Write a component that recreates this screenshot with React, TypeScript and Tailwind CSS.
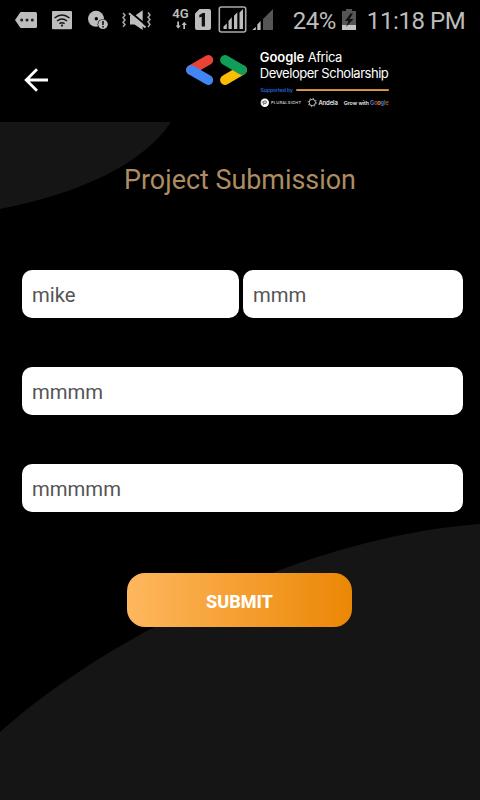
import React from "react";

function StatusBar() {
  return (
    <div className="h-[42px] w-full bg-black">
      <svg width="480" height="42" viewBox="0 0 480 42" className="block" fill="#bdbdbd">
        {/* message tag */}
        <path d="M20.5 12H35.5Q37 12 37 13.500V26.500Q37 28 35.500 28H20.500L15 20Z" />
        <g fill="#222">
          <circle cx="21.700" cy="20" r="1.500" />
          <circle cx="27" cy="20" r="1.500" />
          <circle cx="32.300" cy="20" r="1.500" />
        </g>
        {/* wifi */}
        <rect x="52" y="11" width="20" height="18.300" rx="1" />
        <g fill="none" stroke="#151515" strokeWidth="1.500">
          <path d="M54.500 18Q62 12 69.500 18" />
          <path d="M57 21Q62 17 67 21" />
          <path d="M59.400 23.700Q62 21.700 64.600 23.700" />
        </g>
        <circle cx="62" cy="25.600" r="1.100" fill="#151515" />
        {/* disc with alert */}
        <circle cx="96" cy="18.800" r="8" />
        <circle cx="96.300" cy="18.800" r="1.700" fill="#000" />
        <circle cx="103" cy="24.300" r="5.400" fill="#000" />
        <circle cx="103" cy="24.300" r="4.800" />
        <path d="M102.200 21h1.600v4h-1.600zM102.200 26h1.600v1.600h-1.600z" fill="#111" />
        {/* muted speaker */}
        <path d="M130 16H134.500L142.700 10.300V30L134.500 24.500H130Z" />
        <path d="M130.500 12.200L147 25.800" stroke="#000" strokeWidth="2" />
        <path d="M129 13.200L145.500 27.500" stroke="#bdbdbd" strokeWidth="2" />
        <path
          d="M123 13l2 2.300-2 2.300 2 2.300-2 2.300 2 2.300-2 2.300M148 12.500l2 2.500-2 2.300 2 2.300-2 2.300 2 2.300-2 3"
          fill="none"
          stroke="#a8a8a8"
          strokeWidth="1.500"
        />
        {/* mobile data */}
        <text x="172.300" y="18" fontFamily="Roboto, sans-serif" fontSize="12.600" fontWeight="600" textLength="16.500" lengthAdjust="spacingAndGlyphs">4G</text>
        <path d="M177.300 21.500h1.700v4h1.700l-2.500 3.300-2.500-3.300h1.600zM183.300 29h1.700v-4h1.700l-2.500-3.300-2.500 3.300h1.600z" />
        {/* sim */}
        <path d="M199.500 9H209Q211 9 211 11V28Q211 30 209 30H197Q195 30 195 28V13.500Z" />
        <path d="M202.800 13H205V26.500H201.700V16.700L199.300 17.600V15Z" fill="#111" />
        {/* boxed signal */}
        <rect x="219.300" y="7" width="26.400" height="25" rx="2" fill="none" stroke="#aaa" strokeWidth="1.600" />
        <path d="M223.500 29v-2.500l3.300-3V29zM228.500 29v-8l3.300-3.700V29zM234 29V15.800l3.300-3.500V29zM239.500 29V12.500l3.500-3.500V29z" />
        {/* signal */}
        <path d="M263 30V19L273 9V30Z" fill="#555" />
        <path d="M252.300 30l3.500-3.300V30zM257.300 30v-5.500l3.300-3.500V30z" />
        <text x="292.800" y="29" fontFamily="Roboto, sans-serif" fontSize="24" textLength="43.500">24%</text>
        {/* battery */}
        <path d="M342 11H346V9H352V11H356V30H342Z" fill="#555" />
        <path d="M342 25H356V30H342Z" fill="#c4c4c4" />
        <path d="M350.500 13.500L345 21H348.500L346 27L353.500 19H349.500L353 13.500Z" fill="#111" />
        <text x="366.800" y="29" fontFamily="Roboto, sans-serif" fontSize="24" textLength="99">11:18 PM</text>
      </svg>
    </div>
  );
}

function ScholarshipLogo() {
  return (
    <svg width="220" height="64" viewBox="182 48 220 64" className="block" fill="#fff" fontFamily="Inter, sans-serif">
      <g strokeWidth="9.800" strokeLinecap="round" fill="none">
        <path d="M208.300 60L191 70" stroke="#ea4335" />
        <path d="M191 70L208.300 80" stroke="#4285f4" />
        <path d="M225 80L242 70" stroke="#fbbc04" />
        <path d="M225 60L242 70" stroke="#0f9d58" />
      </g>
      <text x="259.800" y="62" fontSize="13" fontWeight="600" textLength="44.500">Google</text>
      <text x="307.800" y="62" fontSize="13" textLength="34.500">Africa</text>
      <text x="259.800" y="78" fontSize="13" textLength="129">Developer Scholarship</text>
      <text x="260.500" y="91.700" fontSize="5.200" fontWeight="600" fill="#2166dc" textLength="32.500">Supported by</text>
      <rect x="296.300" y="89.100" width="92.500" height="1.900" fill="#dd9a45" />
      <circle cx="264.800" cy="102.700" r="4.200" />
      <path d="M263.700 105V101H266.200V103.300H264M262.200 103.300V101.500" fill="none" stroke="#333" strokeWidth=".7" />
      <text x="271" y="104.300" fontSize="4" fontWeight="500" textLength="30" fill="#ddd">PLURALSIGHT</text>
      <circle cx="312.300" cy="102.500" r="3.200" fill="none" stroke="#ddd" strokeWidth=".9" />
      <circle cx="312.300" cy="102.500" r="4.200" fill="none" stroke="#ddd" strokeWidth="1" strokeDasharray="1 2.300" />
      <text x="318.500" y="104.800" fontSize="6" fontWeight="500" textLength="19.300">Andela</text>
      <text x="343.800" y="104.600" fontSize="5.300" fontWeight="500" textLength="25.200">Grow with</text>
      <text x="370" y="104.600" fontSize="5.600" fontWeight="600" textLength="18.500">
        <tspan fill="#4285f4">G</tspan><tspan fill="#ea4335">o</tspan><tspan fill="#fbbc04">o</tspan><tspan fill="#4285f4">g</tspan><tspan fill="#34a853">l</tspan><tspan fill="#ea4335">e</tspan>
      </text>
    </svg>
  );
}

function Field({ value, className }: { value: string; className: string }) {
  return (
    <input
      defaultValue={value}
      className={`h-12 rounded-[10px] bg-white px-[10px] pt-px text-[20.300px] text-[#555] outline-none ${className}`}
    />
  );
}

export default function App() {
  return (
    <div className="flex h-[800px] w-[480px] flex-col overflow-hidden bg-black font-[Roboto,sans-serif]">
      <StatusBar />
      <header className="flex h-20 shrink-0 items-start pl-6 pt-[6px]">
        <button aria-label="Back" className="mt-5">
          <svg width="24" height="24" viewBox="0 0 24 24" className="block" fill="none" stroke="#fff" strokeWidth="2.800">
            <path d="M24 12H2.500M13 1.200L2.200 12L13 22.800" />
          </svg>
        </button>
        <div className="ml-[134px]">
          <ScholarshipLogo />
        </div>
      </header>
      <main className="relative h-[678px] w-full">
        <svg className="absolute inset-0" width="480" height="678" viewBox="0 122 480 678" fill="#151515">
          <path d="M0 122H171C142 165 80 193 0 209Z" />
          <path d="M0 732C90 650 290 538 480 524V800H0Z" />
        </svg>
        <div className="relative flex flex-col items-center">
          <h1 className="mt-[42px] h-8 whitespace-nowrap text-[26.900px] leading-8 text-[#ae8c61]">Project Submission</h1>
          <form className="mt-[74px] flex w-full flex-col pl-[22px] pr-[17px]">
            <div className="flex gap-1">
              <Field value="mike" className="w-[217px]" />
              <Field value="mmm" className="w-[220px]" />
            </div>
            <Field value="mmmm" className="mt-[49px] w-full" />
            <Field value="mmmmm" className="mt-[49px] w-full" />
            <button
              type="button"
              className="ml-[105px] mt-[61px] h-[54px] w-[225px] rounded-[18px] bg-linear-to-r/srgb from-[#ffb75e] to-[#eb8705] pt-[2px] text-[18px] font-extrabold text-white"
            >
              SUBMIT
            </button>
          </form>
        </div>
      </main>
    </div>
  );
}
